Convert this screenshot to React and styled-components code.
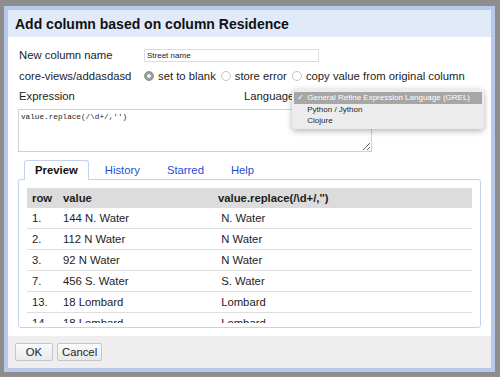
import styled, { createGlobalStyle } from "styled-components";

const GlobalStyle = createGlobalStyle`
  html, body {
    margin: 0;
    padding: 0;
  }
  body {
    background: #8d8d8d;
    font-family: "Liberation Sans", Arial, sans-serif;
    font-size: 11.3px;
    color: #1d1d1d;
  }
`;

const Page = styled.div`
  width: 500px;
  height: 377px;
  padding: 6px 5px 5px 4px;
  box-sizing: border-box;
`;

const Dialog = styled.div`
  height: 100%;
  box-sizing: border-box;
  border: 4px solid #b7c8e9;
  background: #fff;
  display: flex;
  flex-direction: column;
`;

const Header = styled.div`
  height: 27px;
  flex: none;
  display: flex;
  align-items: center;
  padding: 0 7px;
  background: #e0eaf8;
  font-size: 14px;
  font-weight: bold;
  color: #111;
`;

const Body = styled.div`
  flex: 1;
  padding: 8px 10px 0;
  display: flex;
  flex-direction: column;
`;

const FieldRow = styled.div`
  height: ${(p) => p.$h || 20}px;
  display: grid;
  grid-template-columns: 125px 1fr;
  align-items: center;
  padding-left: 1px;
`;

const Options = styled.div`
  display: flex;
  align-items: center;
`;

const TextInput = styled.input`
  width: 175px;
  height: 13px;
  box-sizing: border-box;
  border: 1px solid #dcdcdc;
  padding: 0 2px;
  font-family: "Liberation Sans", Arial, sans-serif;
  font-size: 8px;
  color: #222;
  outline: none;
`;

const Radio = styled.span`
  width: 10px;
  height: 10px;
  box-sizing: border-box;
  border-radius: 50%;
  border: 1px solid ${(p) => (p.$on ? "#8f8f8f" : "#c4c4c4")};
  background: ${(p) =>
    p.$on ? "radial-gradient(circle, #eeeeee 0 1.6px, #9b9b9b 2.2px)" : "#fff"};
  margin-right: 4px;
`;

const RadioLabel = styled.span`
  margin-right: 5px;
`;

const ExprRow = styled.div`
  height: 20px;
  display: grid;
  grid-template-columns: 225px auto 1fr;
  align-items: center;
  padding-left: 1px;
`;

const SelectWrap = styled.div`
  position: relative;
  height: 100%;
`;

const Menu = styled.div`
  position: absolute;
  top: 3px;
  left: -2px;
  width: 192px;
  box-sizing: border-box;
  padding: 3px 2px 2px;
  background: #ececec;
  border-radius: 4px;
  box-shadow: 0 2px 6px rgba(0, 0, 0, 0.3);
  z-index: 5;
  font-size: 8px;
`;

const MenuItem = styled.div`
  height: 11.5px;
  display: flex;
  align-items: center;
  padding-left: 3px;
  background: ${(p) => (p.$active ? "#a6a6a6" : "transparent")};
  color: ${(p) => (p.$active ? "#fff" : "#262626")};
`;

const Check = styled.span`
  width: 10px;
  font-size: 8px;
  font-family: "DejaVu Sans", sans-serif;
`;

const ExprArea = styled.textarea`
  margin-top: 3px;
  width: 354px;
  height: 43px;
  box-sizing: border-box;
  border: 1px solid #d2d2d2;
  padding: 3px 2px;
  font-family: "Liberation Mono", "Courier New", monospace;
  font-size: 7.7px;
  line-height: 9px;
  color: #222;
  resize: both;
  outline: none;
`;

const TabBar = styled.div`
  margin-top: 7px;
  height: 20px;
  display: flex;
  align-items: flex-end;
  padding-left: 6px;
`;

const Tab = styled.div`
  height: 20px;
  box-sizing: border-box;
  padding: 0 10px;
  margin-right: 5px;
  line-height: 19px;
  border: 1px solid ${(p) => (p.$active ? "#c3d2ee" : "transparent")};
  border-bottom: none;
  border-radius: 3px 3px 0 0;
  background: ${(p) => (p.$active ? "#fff" : "transparent")};
  color: ${(p) => (p.$active ? "#111" : "#1f4fd0")};
  font-weight: ${(p) => (p.$active ? "bold" : "normal")};
  position: relative;
  z-index: ${(p) => (p.$active ? 1 : 0)};
  margin-bottom: -1px;
`;

const Panel = styled.div`
  height: 149px;
  box-sizing: border-box;
  border: 1px solid #c3d2ee;
  border-radius: 3px;
  padding: 8px 8px 0;
`;

const Scroll = styled.div`
  height: 135px;
  overflow: hidden;
`;

const Table = styled.table`
  width: 100%;
  border-collapse: collapse;
`;

const Th = styled.th`
  height: 20px;
  padding: 0 5px;
  background: #dcdcdc;
  text-align: left;
  font-weight: bold;
  width: ${(p) => p.$w || "auto"};
  box-sizing: border-box;
`;

const Td = styled.td`
  height: 20px;
  padding: 0 5px;
  border-bottom: 1px solid #dedede;
  white-space: pre;
`;

const Footer = styled.div`
  height: 32px;
  flex: none;
  display: flex;
  align-items: center;
  gap: 4px;
  padding: 0 7px;
  background: #eeeeee;
`;

const Button = styled.button`
  height: 18px;
  min-width: 38px;
  padding: 0 4px;
  border: 1px solid #c6c6c6;
  border-radius: 2px;
  background: linear-gradient(#fbfbfb, #e9e9e9);
  font-family: "Liberation Sans", Arial, sans-serif;
  font-size: 11.3px;
  color: #1d1d1d;
`;

const rows = [
  ["1.", "144 N. Water", " N. Water"],
  ["2.", "112 N Water", " N Water"],
  ["3.", "92 N Water", " N Water"],
  ["7.", "456 S. Water", " S. Water"],
  ["13.", "18 Lombard", " Lombard"],
  ["14.", "18 Lombard", " Lombard"],
  ["15.", "20 Lombard", " Lombard"],
];

const expr = "value.replace(/\\d+/,'')";

export default function App() {
  return (
    <>
      <GlobalStyle />
      <Page>
        <Dialog>
          <Header>Add column based on column Residence</Header>
          <Body>
            <FieldRow>
              <span>New column name</span>
              <TextInput defaultValue="Street name" />
            </FieldRow>
            <FieldRow $h={21}>
              <span>core-views/addasdasd</span>
              <Options>
                <Radio $on />
                <RadioLabel>set to blank</RadioLabel>
                <Radio />
                <RadioLabel>store error</RadioLabel>
                <Radio />
                <RadioLabel>copy value from original column</RadioLabel>
              </Options>
            </FieldRow>
            <ExprRow>
              <span>Expression</span>
              <span>Language</span>
              <SelectWrap>
                <Menu>
                  <MenuItem $active>
                    <Check>✓</Check>General Refine Expression Language (GREL)
                  </MenuItem>
                  <MenuItem>
                    <Check />Python / Jython
                  </MenuItem>
                  <MenuItem>
                    <Check />Clojure
                  </MenuItem>
                </Menu>
              </SelectWrap>
            </ExprRow>
            <ExprArea defaultValue={expr} spellCheck={false} />
            <TabBar>
              <Tab $active>Preview</Tab>
              <Tab>History</Tab>
              <Tab>Starred</Tab>
              <Tab>Help</Tab>
            </TabBar>
            <Panel>
              <Scroll>
                <Table>
                  <thead>
                    <tr>
                      <Th $w="31px">row</Th>
                      <Th $w="155px">value</Th>
                      <Th>{expr}</Th>
                    </tr>
                  </thead>
                  <tbody>
                    {rows.map((r) => (
                      <tr key={r[0]}>
                        <Td>{r[0]}</Td>
                        <Td>{r[1]}</Td>
                        <Td>{r[2]}</Td>
                      </tr>
                    ))}
                  </tbody>
                </Table>
              </Scroll>
            </Panel>
          </Body>
          <Footer>
            <Button>OK</Button>
            <Button>Cancel</Button>
          </Footer>
        </Dialog>
      </Page>
    </>
  );
}
